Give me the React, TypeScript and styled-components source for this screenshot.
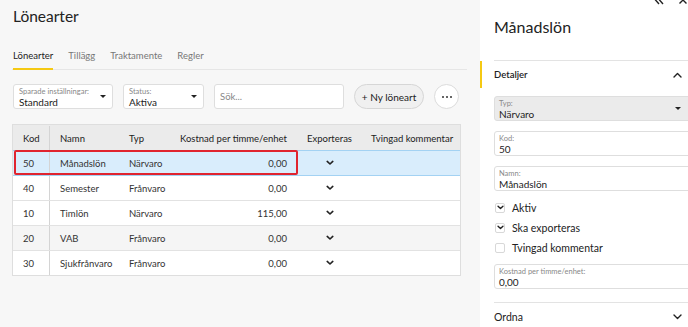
import React from "react";
import styled, { createGlobalStyle } from "styled-components";

const GlobalStyle = createGlobalStyle`
  html, body { margin: 0; padding: 0; }
  body {
    font-family: Lato, "Open Sans", "Liberation Sans", sans-serif;
    color: #222;
    background: #f7f7f7;
  }
`;

const Page = styled.div`
  display: flex;
  width: 688px;
  height: 327px;
  overflow: hidden;
`;

const Main = styled.div`
  width: 480px;
  box-sizing: border-box;
  padding: 0 13px 0 12px;
  flex: none;
  background: #f7f7f7;
  position: relative;
`;

const Title = styled.h1`
  margin: 0;
  padding: 7px 0 0 1px;
  font-size: 15.5px;
  font-weight: 400;
  height: 27px;
`;

const Tabs = styled.div`
  display: flex;
  gap: 15px;
  margin-top: 16px;
  padding-left: 1px;
  border-bottom: 1px solid #e6e6e6;
`;

const Tab = styled.div<{ $active?: boolean }>`
  font-size: 9.5px;
  color: ${(p) => (p.$active ? "#222" : "#777")};
  padding-bottom: 7px;
  border-bottom: 2px solid ${(p) => (p.$active ? "#f5c913" : "transparent")};
  margin-bottom: -1px;
`;

const Toolbar = styled.div`
  display: flex;
  align-items: center;
  gap: 10px;
  margin-top: 14px;
  padding-left: 1px;
`;

const Select = styled.div<{ $w: number }>`
  width: ${(p) => p.$w}px;
  height: 25px;
  box-sizing: border-box;
  background: #fff;
  border: 1px solid #dedede;
  border-radius: 3px;
  padding: 2px 5px 0;
  position: relative;
`;

const SelLabel = styled.div`
  font-size: 7.5px;
  color: #888;
  line-height: 9px;
`;

const SelValue = styled.div`
  font-size: 10px;
  line-height: 12px;
  color: #222;
`;

const Caret = styled.span`
  position: absolute;
  right: 6px;
  top: 10px;
  width: 0;
  height: 0;
  border-left: 3px solid transparent;
  border-right: 3px solid transparent;
  border-top: 3px solid #222;
`;

const Search = styled.div`
  width: 130px;
  height: 25px;
  box-sizing: border-box;
  background: #fff;
  border: 1px solid #dedede;
  border-radius: 3px;
  padding-left: 5px;
  font-size: 9.5px;
  color: #888;
  display: flex;
  align-items: center;
`;

const PillButton = styled.div`
  width: 70px;
  height: 25px;
  box-sizing: border-box;
  border: 1px solid #d6d6d6;
  border-radius: 13px;
  background: #f0f0f0;
  font-size: 10px;
  color: #222;
  display: flex;
  align-items: center;
  justify-content: center;
`;

const RoundButton = styled.div`
  width: 25px;
  height: 25px;
  box-sizing: border-box;
  border: 1px solid #dcdcdc;
  border-radius: 50%;
  background: #fff;
  display: flex;
  align-items: center;
  justify-content: center;
  gap: 2px;
`;

const Dot = styled.span`
  width: 2px;
  height: 2px;
  border-radius: 50%;
  background: #333;
`;

const Table = styled.div`
  margin-top: 15px;
  width: 447px;
  border: 1px solid #dedede;
  background: #fff;
`;

const Row = styled.div<{ $kind?: "head" | "sel" | "alt" }>`
  display: grid;
  grid-template-columns: 37px 69px 57px 122px 63px 1fr;
  height: 24px;
  align-items: center;
  font-size: 9.5px;
  color: ${(p) => (p.$kind === "head" ? "#222" : "#333")};
  background: ${(p) =>
    p.$kind === "head" ? "#ebebeb" : p.$kind === "sel" ? "#d9edfc" : p.$kind === "alt" ? "#f5f5f5" : "#fff"};
  border-top: 1px solid ${(p) => (p.$kind === "sel" ? "#a3d2f3" : p.$kind === "head" ? "transparent" : "#e2e2e2")};
  ${(p) => (p.$kind === "sel" ? "border-bottom: 1px solid #a3d2f3; margin-bottom: -1px; position: relative;" : "")}
`;

const Cell = styled.div<{ $align?: "left" | "right" | "center"; $first?: boolean }>`
  height: 100%;
  display: flex;
  align-items: center;
  justify-content: ${(p) => (p.$align === "right" ? "flex-end" : p.$align === "center" ? "center" : "flex-start")};
  padding: ${(p) => (p.$align === "right" ? "0 11px 0 0" : p.$align === "center" ? "0" : "0 0 0 10px")};
  ${(p) => (p.$first ? "border-right: 1px solid #d4d4d4;" : "")}
  white-space: nowrap;
`;

const Highlight = styled.div`
  position: absolute;
  left: 14px;
  top: 150px;
  width: 284px;
  height: 25px;
  border: 2px solid #e0242f;
  border-radius: 2px;
  box-sizing: border-box;
  pointer-events: none;
`;

const Side = styled.div`
  flex: 1;
  background: #fff;
  padding-left: 14px;
  position: relative;
  overflow: hidden;
`;

const SideTop = styled.div`
  display: flex;
  justify-content: flex-end;
  gap: 14px;
  margin-top: -5px;
  height: 10px;
`;

const SideTitle = styled.h2`
  margin: 0;
  padding-top: 12px;
  font-size: 16px;
  font-weight: 400;
  box-sizing: border-box;
  height: 55px;
`;

const Section = styled.div<{ $accent?: boolean }>`
  border-top: 1px solid #e3e3e3;
  height: 27px;
  display: flex;
  align-items: center;
  justify-content: space-between;
  padding-right: 6px;
  font-size: 10px;
  position: relative;
  &::before {
    content: "";
    display: ${(p) => (p.$accent ? "block" : "none")};
    position: absolute;
    left: -15px;
    top: 0;
    bottom: 0;
    width: 3px;
    background: #f5c913;
  }
`;

const SectionTitle = styled.span<{ $bold?: boolean }>`
  font-weight: ${(p) => (p.$bold ? 600 : 400)};
  font-size: ${(p) => (p.$bold ? "9.5px" : "10.5px")};
`;

const Form = styled.div`
  display: flex;
  flex-direction: column;
  gap: 10px;
  padding-top: 8px;
  width: 205px;
`;

const Field = styled.div<{ $disabled?: boolean }>`
  height: 25px;
  box-sizing: border-box;
  border: 1px solid #dedede;
  border-radius: 3px;
  background: ${(p) => (p.$disabled ? "#ebebeb" : "#fff")};
  padding: 2px 4px 0;
  position: relative;
`;

const FieldCaret = styled(Caret)`
  right: 17px;
`;

const Checks = styled.div`
  display: flex;
  flex-direction: column;
  gap: 7px;
  padding: 0 0 0 1px;
`;

const CheckRow = styled.label`
  display: flex;
  align-items: center;
  gap: 7px;
  font-size: 10.5px;
  height: 13px;
`;

const Box = styled.span`
  width: 10px;
  height: 10px;
  box-sizing: border-box;
  border: 1px solid #d8d8d8;
  border-radius: 2px;
  background: #fff;
  display: flex;
  align-items: center;
  justify-content: center;
`;

const Footer = styled.div`
  margin-top: 13px;
`;

const Check = ({ size = 8 }: { size?: number }) => (
  <svg width={size} height={size * 0.7} viewBox="0 0 10 7">
    <polyline points="1.5,1.8 5,5 8.5,1.8" fill="none" stroke="#222" strokeWidth="2" strokeLinecap="round" strokeLinejoin="round" />
  </svg>
);

const Chevron = ({ up }: { up?: boolean }) => (
  <svg width="9" height="6" viewBox="0 0 9 6">
    <polyline
      points={up ? "1,5 4.5,1.5 8,5" : "1,1 4.5,4.5 8,1"}
      fill="none"
      stroke="#222"
      strokeWidth="1.4"
      strokeLinecap="round"
      strokeLinejoin="round"
    />
  </svg>
);

type Item = { kod: string; namn: string; typ: string; cost: string; kind?: "sel" | "alt" };

const items: Item[] = [
  { kod: "50", namn: "Månadslön", typ: "Närvaro", cost: "0,00", kind: "sel" },
  { kod: "40", namn: "Semester", typ: "Frånvaro", cost: "0,00" },
  { kod: "10", namn: "Timlön", typ: "Närvaro", cost: "115,00" },
  { kod: "20", namn: "VAB", typ: "Frånvaro", cost: "0,00", kind: "alt" },
  { kod: "30", namn: "Sjukfrånvaro", typ: "Frånvaro", cost: "0,00" },
];

export default function App() {
  return (
    <Page>
      <GlobalStyle />
      <Main>
        <Title>Lönearter</Title>
        <Tabs>
          <Tab $active>Lönearter</Tab>
          <Tab>Tillägg</Tab>
          <Tab>Traktamente</Tab>
          <Tab>Regler</Tab>
        </Tabs>
        <Toolbar>
          <Select $w={100}>
            <SelLabel>Sparade inställningar:</SelLabel>
            <SelValue>Standard</SelValue>
            <Caret />
          </Select>
          <Select $w={81}>
            <SelLabel>Status:</SelLabel>
            <SelValue>Aktiva</SelValue>
            <Caret />
          </Select>
          <Search>Sök...</Search>
          <PillButton>+ Ny löneart</PillButton>
          <RoundButton>
            <Dot />
            <Dot />
            <Dot />
          </RoundButton>
        </Toolbar>
        <Table>
          <Row $kind="head">
            <Cell $first>Kod</Cell>
            <Cell>Namn</Cell>
            <Cell>Typ</Cell>
            <Cell $align="right">Kostnad per timme/enhet</Cell>
            <Cell $align="center">Exporteras</Cell>
            <Cell>Tvingad kommentar</Cell>
          </Row>
          {items.map((it) => (
            <Row key={it.kod} $kind={it.kind}>
              <Cell $first>{it.kod}</Cell>
              <Cell>{it.namn}</Cell>
              <Cell>{it.typ}</Cell>
              <Cell $align="right">{it.cost}</Cell>
              <Cell $align="center">
                <Check />
              </Cell>
              <Cell />
            </Row>
          ))}
        </Table>
        <Highlight />
      </Main>
      <Side>
        <SideTop>
          <svg width="10" height="10" viewBox="0 0 10 10">
            <polyline points="5,1 1.5,5 5,9" fill="none" stroke="#222" strokeWidth="1.4" />
            <polyline points="9,1 5.5,5 9,9" fill="none" stroke="#222" strokeWidth="1.4" />
          </svg>
          <svg width="10" height="10" viewBox="0 0 10 10">
            <path d="M1.5 1.5 L8.5 8.5 M8.5 1.5 L1.5 8.5" stroke="#222" strokeWidth="1.4" />
          </svg>
        </SideTop>
        <SideTitle>Månadslön</SideTitle>
        <Section $accent>
          <SectionTitle $bold>Detaljer</SectionTitle>
          <Chevron up />
        </Section>
        <Form>
          <Field $disabled>
            <SelLabel>Typ:</SelLabel>
            <SelValue>Närvaro</SelValue>
            <FieldCaret />
          </Field>
          <Field>
            <SelLabel>Kod:</SelLabel>
            <SelValue>50</SelValue>
          </Field>
          <Field>
            <SelLabel>Namn:</SelLabel>
            <SelValue>Månadslön</SelValue>
          </Field>
          <Checks>
            <CheckRow>
              <Box>
                <Check size={7} />
              </Box>
              Aktiv
            </CheckRow>
            <CheckRow>
              <Box>
                <Check size={7} />
              </Box>
              Ska exporteras
            </CheckRow>
            <CheckRow>
              <Box />
              Tvingad kommentar
            </CheckRow>
          </Checks>
          <Field>
            <SelLabel>Kostnad per timme/enhet:</SelLabel>
            <SelValue>0,00</SelValue>
          </Field>
        </Form>
        <Footer>
          <Section>
            <SectionTitle>Ordna</SectionTitle>
            <Chevron />
          </Section>
        </Footer>
      </Side>
    </Page>
  );
}
